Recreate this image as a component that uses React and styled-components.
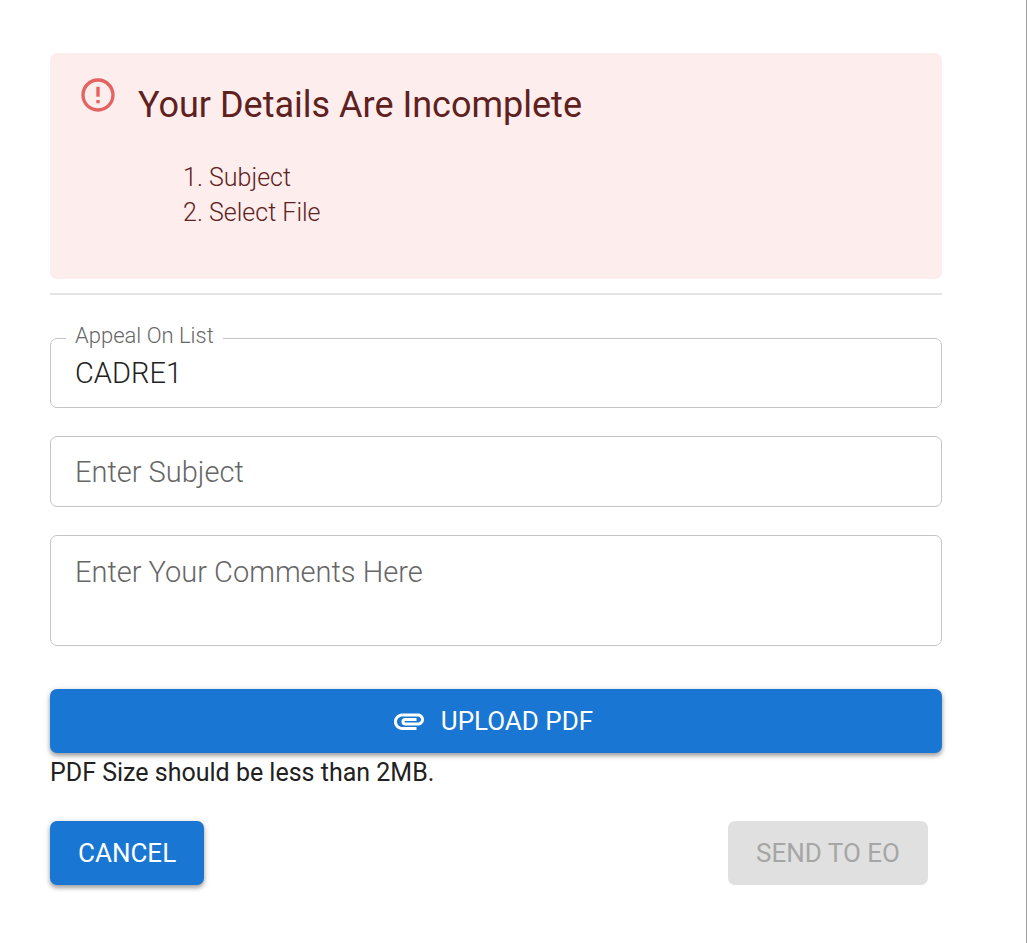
import { useState } from "react";
import styled, { createGlobalStyle } from "styled-components";
import { MdAttachment, MdErrorOutline } from "react-icons/md";

const GlobalStyle = createGlobalStyle`
  * {
    box-sizing: border-box;
  }

  body {
    margin: 0;
    background: #fff;
    color: #212121;
    font-family: Roboto, "Liberation Sans", sans-serif;
    font-weight: 400;
  }
`;

const Page = styled.main`
  min-height: 100vh;
  padding: 53px 84px 53px 50px;
  border-right: 1px solid #9e9e9e;
`;

const Alert = styled.section`
  display: flex;
  gap: 20px;
  padding: 22px 28px 49px;
  border-radius: 7px;
  background: #fdeded;
  color: #5f2120;
`;

const AlertIcon = styled(MdErrorOutline)`
  flex: none;
  width: 40px;
  height: 40px;
  color: #e46361;
`;

const AlertTitle = styled.h1`
  margin: 6px 0 31px;
  font-size: 36px;
  font-weight: 400;
  line-height: 48px;
`;

const MissingList = styled.ol`
  margin: 0;
  padding-left: 71px;
  font-size: 25px;
  font-weight: 300;
  line-height: 35px;
`;

const Divider = styled.hr`
  height: 2px;
  margin: 14px 0 0;
  border: 0;
  background: #e4e4e4;
`;

const Form = styled.form`
  display: flex;
  flex-direction: column;
  gap: 28px;
  margin-top: 27px;
`;

const OutlinedField = styled.fieldset`
  min-width: 0;
  margin: 0;
  padding: 0 15px;
  border: 1px solid #c4c4c4;
  border-radius: 7px;
`;

const Legend = styled.legend`
  padding: 0 9px 4px;
  color: #666;
  font-size: 22px;
  font-weight: 300;
  line-height: 28px;
`;

const FieldInput = styled.input`
  display: block;
  width: 100%;
  height: 53px;
  padding: 0 9px 16px;
  border: 0;
  outline: 0;
  background: transparent;
  color: #212121;
  font: 300 29px / 36px Roboto, "Liberation Sans", sans-serif;
`;

const TextInput = styled.input`
  display: block;
  width: 100%;
  height: 71px;
  padding: 0 24px;
  border: 1px solid #c4c4c4;
  border-radius: 7px;
  background: #fff;
  color: #212121;
  font: 300 29px / 40px Roboto, "Liberation Sans", sans-serif;

  &::placeholder {
    color: #666;
    opacity: 1;
  }
`;

const TextArea = styled(TextInput).attrs({ as: "textarea" })`
  height: 111px;
  padding: 16px 24px;
  resize: none;
`;

const Button = styled.button`
  display: flex;
  align-items: center;
  justify-content: center;
  gap: 14px;
  width: ${(props) => (props.$wide ? "100%" : "auto")};
  height: 64px;
  padding: ${(props) => (props.$wide ? "0 36px 0 28px" : "0 28px")};
  border: 0;
  border-radius: 7px;
  background: #1976d2;
  color: #fff;
  font: 400 26px / 40px Roboto, "Liberation Sans", sans-serif;
  text-transform: uppercase;
  cursor: pointer;
  box-shadow: 0 3px 4px rgba(0, 0, 0, 0.3), 0 1px 7px rgba(0, 0, 0, 0.14);

  &:disabled {
    background: #e0e0e0;
    color: #a6a6a6;
    box-shadow: none;
    cursor: default;
  }
`;

const AttachmentIcon = styled(MdAttachment)`
  width: 36px;
  height: 36px;
`;

const Upload = styled.div`
  margin-top: 15px;
`;

const Hint = styled.p`
  margin: 2px 0 0;
  font-size: 25px;
  line-height: 35px;
`;

const Actions = styled.div`
  display: flex;
  justify-content: space-between;
  margin-top: 3px;
  padding-right: 14px;
`;

export default function App() {
  const [list, setList] = useState("CADRE1");
  const [subject, setSubject] = useState("");
  const [comments, setComments] = useState("");

  return (
    <>
      <GlobalStyle />
      <Page>
        <Alert role="alert">
          <AlertIcon aria-hidden="true" />
          <div>
            <AlertTitle>Your Details Are Incomplete</AlertTitle>
            <MissingList>
              <li>Subject</li>
              <li>Select File</li>
            </MissingList>
          </div>
        </Alert>
        <Divider />

        <Form onSubmit={(e) => e.preventDefault()}>
          <OutlinedField>
            <Legend>
              <label htmlFor="appeal-list">Appeal On List</label>
            </Legend>
            <FieldInput
              id="appeal-list"
              type="text"
              value={list}
              onChange={(e) => setList(e.target.value)}
            />
          </OutlinedField>
          <TextInput
            type="text"
            aria-label="Enter Subject"
            placeholder="Enter Subject"
            value={subject}
            onChange={(e) => setSubject(e.target.value)}
          />
          <TextArea
            aria-label="Enter Your Comments Here"
            placeholder="Enter Your Comments Here"
            value={comments}
            onChange={(e) => setComments(e.target.value)}
          />

          <Upload>
            <Button type="button" $wide>
              <AttachmentIcon aria-hidden="true" />
              Upload PDF
            </Button>
            <Hint>PDF Size should be less than 2MB.</Hint>
          </Upload>

          <Actions>
            <Button type="button">Cancel</Button>
            <Button type="submit" disabled>
              Send to EO
            </Button>
          </Actions>
        </Form>
      </Page>
    </>
  );
}
